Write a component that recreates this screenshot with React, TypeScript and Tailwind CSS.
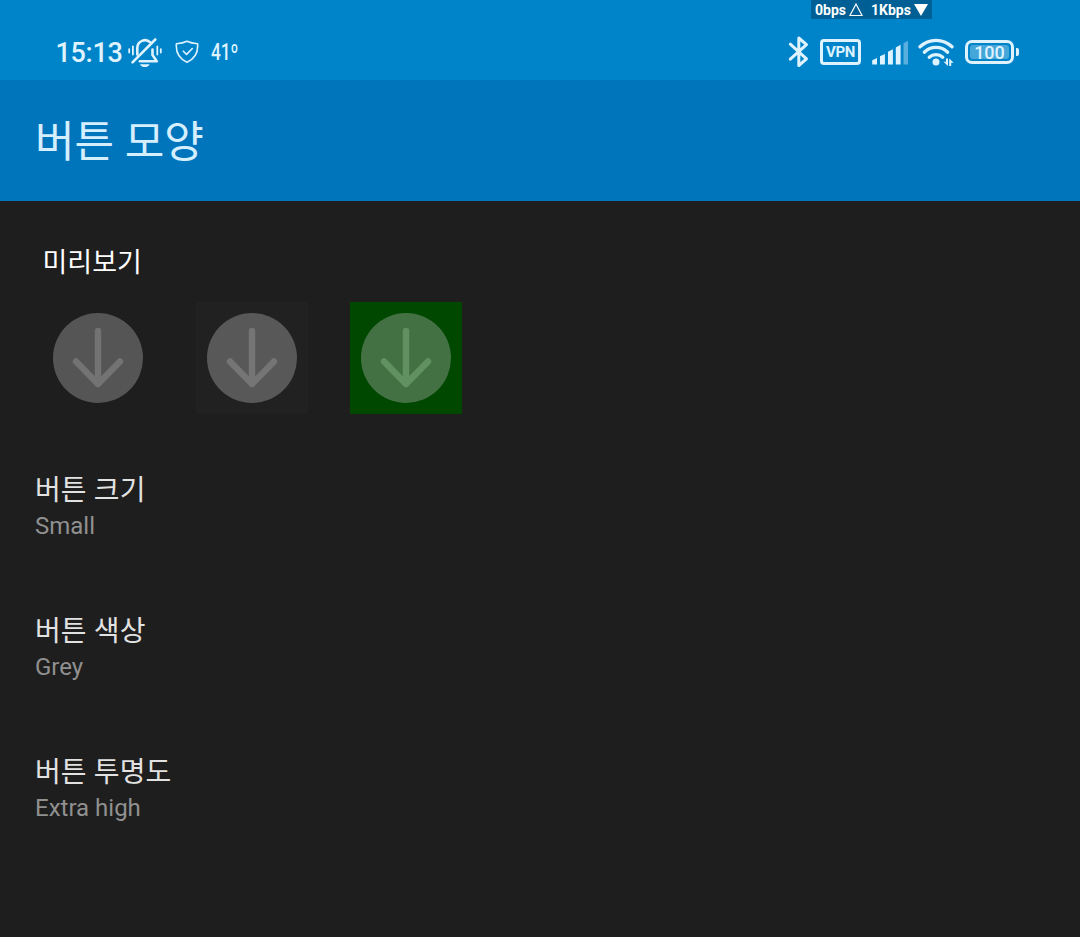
const previewBackgrounds = [
  { key: "plain", tile: "bg-transparent", disc: "#555555", arrow: "#737373" },
  { key: "dark", tile: "bg-[#212121]", disc: "#585858", arrow: "#757575" },
  { key: "green", tile: "bg-[#004800]", disc: "#447144", arrow: "#619161" },
];

const preferences = [
  { title: "버튼 크기", value: "Small" },
  { title: "버튼 색상", value: "Grey" },
  { title: "버튼 투명도", value: "Extra high" },
];

const MutedBellIcon = () => (
  <svg
    className="h-8 w-9 shrink-0"
    viewBox="127 36 36 32"
    fill="none"
    stroke="currentColor"
    strokeWidth="2.6"
    strokeLinecap="round"
    strokeLinejoin="round"
  >
    <path d="M137.3 54.5V48a7.7 7.7 0 0 1 13-5.6" />
    <path d="M155.3 39.5 132.5 62.3" />
    <path d="M152.5 49.5v5.5l4.3 6.2h-17" />
    <path d="M140 64.2h9.6q-1 2.8-4.8 2.8t-4.8-2.8z" fill="currentColor" stroke="none" />
    <path d="M129.2 49.2v3.3M132.9 46.5v8M157.3 46.5v8M160.8 49.2v3.3" strokeWidth="1.8" />
  </svg>
);

const ShieldIcon = () => (
  <svg
    className="h-6 w-6 shrink-0"
    viewBox="175 40 24 24"
    fill="none"
    stroke="currentColor"
    strokeWidth="1.6"
    strokeLinecap="round"
    strokeLinejoin="round"
  >
    <path d="M187 41.2c3.2 1.5 6.6 2.2 10.6 2.5.7 8.2-1.8 14.6-10.6 18.5-8.8-3.9-11.3-10.3-10.6-18.5 4-.3 7.4-1 10.6-2.5z" />
    <path d="m183.3 51.2 3.3 3.2 5.7-5.9" />
  </svg>
);

const BluetoothIcon = () => (
  <svg
    className="h-8 w-6 shrink-0"
    viewBox="786 36 24 32"
    fill="none"
    stroke="currentColor"
    strokeWidth="3"
    strokeLinecap="round"
    strokeLinejoin="round"
  >
    <path d="m790.3 44.2 16.2 14.6-7.7 6.7V38l7.7 6.6-16.2 14.6" />
  </svg>
);

const SignalIcon = () => (
  <svg className="h-8 w-9 shrink-0" viewBox="872 36 36 32" fill="currentColor">
    <path d="M872.2 60.3l4.8-2.3v6.5h-4.8zM880 56.3l4.9-2.3v10.5H880zM888 51.8l4.9-2.5v15.2H888zM895.8 47.4l4.8-2.6v19.7h-4.8z" />
    <path d="M903.5 43.2l4.5-2.5v23.8h-4.5z" opacity="0.4" />
  </svg>
);

const WifiIcon = () => (
  <svg
    className="h-8 w-9 shrink-0"
    viewBox="918 36 36 32"
    fill="none"
    stroke="currentColor"
    strokeWidth="3.3"
    strokeLinecap="round"
  >
    <path d="M920 46.8a23 23 0 0 1 32 0" />
    <path d="M924.3 52.2a16.8 16.8 0 0 1 23.4 0" />
    <path d="M929.2 57.2a10 10 0 0 1 13.6 0" />
    <circle cx="936" cy="62" r="3.5" fill="currentColor" stroke="none" />
    <path
      d="M948 58.6v7.4l-4.5-4.2h2.5v-3.2zM949.2 66v-7.4l4.5 4.2h-2.5v3.2z"
      fill="currentColor"
      stroke="none"
    />
  </svg>
);

const DownArrowButton = ({ disc, arrow }: { disc: string; arrow: string }) => (
  <svg className="h-28 w-28" viewBox="0 0 112 112" fill="none">
    <circle cx="56" cy="56" r="45" fill={disc} />
    <path
      d="M56 29V82M34 59.5l22 22.5 22-22.5"
      stroke={arrow}
      strokeWidth="6.4"
      strokeLinecap="round"
      strokeLinejoin="round"
    />
  </svg>
);

const TrafficBadge = () => (
  <div className="absolute top-0 left-[811px] flex h-[19px] w-[121px] items-center bg-[#005f94] pt-px pl-1 text-[14px] leading-none font-bold whitespace-nowrap text-white">
    <span className="w-[34px]">0bps</span>
    <svg className="h-[14px] w-[14px]" viewBox="0 0 14 14" fill="none" stroke="currentColor" strokeWidth="1.2">
      <path d="M7 1 13 12.5H1z" />
    </svg>
    <span className="ml-2 w-[42px]">1Kbps</span>
    <svg className="h-[14px] w-[16px]" viewBox="0 0 16 14" fill="currentColor">
      <path d="M1 1h14L8 13z" />
    </svg>
  </div>
);

const StatusBar = () => (
  <header className="relative flex h-20 justify-between bg-[#0084c9] pt-6 pr-[61px] pl-[55px] text-[#dff3ff]">
    <div className="flex h-14 items-center">
      <span className="w-[72px] pt-[3px] pl-[0.5px] text-[27px] leading-none font-medium tracking-[-0.3px]">
        15:13
      </span>
      <MutedBellIcon />
      <span className="ml-3 flex">
        <ShieldIcon />
      </span>
      <span className="ml-3 origin-left scale-x-75 text-[23px] leading-none font-medium">41º</span>
    </div>
    <div className="flex h-14 items-center">
      <BluetoothIcon />
      <span className="ml-[10px] flex h-[26px] w-[41px] items-center justify-center rounded-[4px] border-3 border-current pt-px text-[15px] leading-none font-bold tracking-[-0.3px]">
        VPN
      </span>
      <span className="ml-[11px] flex">
        <SignalIcon />
      </span>
      <span className="ml-[10px] flex">
        <WifiIcon />
      </span>
      <span className="ml-[11px] flex h-6 w-[49px] rounded-[7px] border-3 border-current p-[2px]">
        <span className="flex flex-1 items-center justify-center rounded-[3px] bg-[#45a6da] pt-px text-[18px] leading-none font-medium">
          100
        </span>
      </span>
      <span className="ml-[2px] h-2 w-[3px] rounded-r-[2px] bg-current" />
    </div>
    <TrafficBadge />
  </header>
);

export default function App() {
  return (
    <div className="flex h-[937px] w-[1080px] flex-col overflow-hidden bg-[#1e1e1e] font-['Roboto','Noto_Sans_CJK_KR',sans-serif]">
      <StatusBar />
      <div className="flex h-[121px] items-center bg-[#0075bc] pt-[3px] pl-[35px]">
        <h1 className="text-[43px] leading-none text-[#d5efff]">버튼 모양</h1>
      </div>

      <main className="flex flex-col">
        <section className="pt-[42px] pl-[42px]">
          <h2 className="h-[59px] pl-[0.5px] text-[27px] leading-[41px] text-white">미리보기</h2>
          <div className="flex gap-[42px]">
            {previewBackgrounds.map((item) => (
              <div key={item.key} className={`h-28 w-28 ${item.tile}`}>
                <DownArrowButton disc={item.disc} arrow={item.arrow} />
              </div>
            ))}
          </div>
        </section>

        <ul className="mt-[57px] pl-[35px]">
          {preferences.map((preference) => (
            <li key={preference.title} className="h-[141px]">
              <p className="text-[28px] leading-[39px] tracking-[0.1px] text-[#e2e2e2]">{preference.title}</p>
              <p className="text-[24px] leading-8 text-[#909090]">{preference.value}</p>
            </li>
          ))}
        </ul>
      </main>
    </div>
  );
}
